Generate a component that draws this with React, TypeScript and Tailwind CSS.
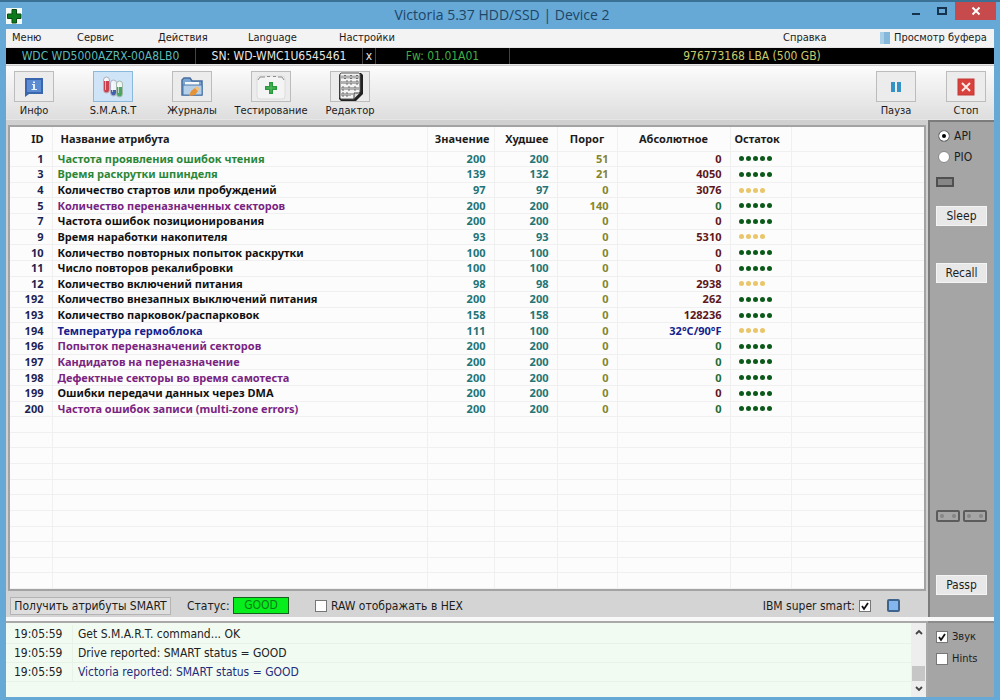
import * as React from 'react';

type Tone = 'green' | 'black' | 'purple' | 'blue';

interface Attribute {
  id: number;
  name: string;
  value: number;
  worst: number;
  threshold: number;
  raw: string;
  health: number;
  tone: Tone;
}

const toneClasses: Record<Tone, string> = {
  green: 'text-[#2b8738]',
  black: 'text-[#111111]',
  purple: 'text-[#7a2482]',
  blue: 'text-[#14228c]',
};

const rawClasses: Record<Tone, string> = {
  green: 'text-[#5e1620]',
  black: 'text-[#5e1620]',
  purple: 'text-[#1c6b35]',
  blue: 'text-[#14228c]',
};

const attributes: Attribute[] = [
  { id: 1, name: 'Частота проявления ошибок чтения', value: 200, worst: 200, threshold: 51, raw: '0', health: 5, tone: 'green' },
  { id: 3, name: 'Время раскрутки шпинделя', value: 139, worst: 132, threshold: 21, raw: '4050', health: 5, tone: 'green' },
  { id: 4, name: 'Количество стартов или пробуждений', value: 97, worst: 97, threshold: 0, raw: '3076', health: 4, tone: 'black' },
  { id: 5, name: 'Количество переназначенных секторов', value: 200, worst: 200, threshold: 140, raw: '0', health: 5, tone: 'purple' },
  { id: 7, name: 'Частота ошибок позиционирования', value: 200, worst: 200, threshold: 0, raw: '0', health: 5, tone: 'black' },
  { id: 9, name: 'Время наработки накопителя', value: 93, worst: 93, threshold: 0, raw: '5310', health: 4, tone: 'black' },
  { id: 10, name: 'Количество повторных попыток раскрутки', value: 100, worst: 100, threshold: 0, raw: '0', health: 5, tone: 'black' },
  { id: 11, name: 'Число повторов рекалибровки', value: 100, worst: 100, threshold: 0, raw: '0', health: 5, tone: 'black' },
  { id: 12, name: 'Количество включений питания', value: 98, worst: 98, threshold: 0, raw: '2938', health: 4, tone: 'black' },
  { id: 192, name: 'Количество внезапных выключений питания', value: 200, worst: 200, threshold: 0, raw: '262', health: 5, tone: 'black' },
  { id: 193, name: 'Количество парковок/распарковок', value: 158, worst: 158, threshold: 0, raw: '128236', health: 5, tone: 'black' },
  { id: 194, name: 'Температура гермоблока', value: 111, worst: 100, threshold: 0, raw: '32°C/90°F', health: 4, tone: 'blue' },
  { id: 196, name: 'Попыток переназначений секторов', value: 200, worst: 200, threshold: 0, raw: '0', health: 5, tone: 'purple' },
  { id: 197, name: 'Кандидатов на переназначение', value: 200, worst: 200, threshold: 0, raw: '0', health: 5, tone: 'purple' },
  { id: 198, name: 'Дефектные секторы во время самотеста', value: 200, worst: 200, threshold: 0, raw: '0', health: 5, tone: 'purple' },
  { id: 199, name: 'Ошибки передачи данных через DMA', value: 200, worst: 200, threshold: 0, raw: '0', health: 5, tone: 'black' },
  { id: 200, name: 'Частота ошибок записи (multi-zone errors)', value: 200, worst: 200, threshold: 0, raw: '0', health: 5, tone: 'purple' },
];

const EMPTY_ROWS = 11;

const logLines = [
  { time: '19:05:59', text: 'Get S.M.A.R.T. command... OK', className: 'text-[#222222]' },
  { time: '19:05:59', text: 'Drive reported: SMART status = GOOD', className: 'text-[#222222]' },
  { time: '19:05:59', text: 'Victoria reported: SMART status = GOOD', className: 'text-[#252c7a]' },
];

const InfoIcon = () => (
  <svg viewBox="0 0 22 22" className="h-[22px] w-[22px]">
    <path d="M2 2h18v16H6l-4 3z" fill="#3a66ae" />
    <rect x="4" y="4" width="14" height="12" fill="#5b8cd2" />
    <path d="M9 8h3v5h2v1H8.500v-1h1.500V9H9zM10 5.500h2v1.500h-2z" fill="#e4efff" />
  </svg>
);

const TubesIcon = () => (
  <svg viewBox="0 0 22 24" className="h-[24px] w-[22px]">
    <rect x="1.500" y="2" width="6" height="16" rx="3" fill="#f4f4f8" stroke="#b0aebc" />
    <path d="M2 6h5v9a2.500 2.500 0 0 1-5 0z" fill="#c9424e" />
    <rect x="8.500" y="5" width="6" height="16" rx="3" fill="#f0f3fa" stroke="#a9afc4" />
    <path d="M9 15h5v3a2.500 2.500 0 0 1-5 0z" fill="#3f63ab" />
    <rect x="14.500" y="6" width="6" height="16" rx="3" fill="#eef6f0" stroke="#a4b8ac" />
    <path d="M15 12h5v7a2.500 2.500 0 0 1-5 0z" fill="#4aa565" />
    <path d="M3.500 4v11M10.500 8v9M16.500 9v9" stroke="#ffffff" strokeOpacity=".6" />
  </svg>
);

const FolderIcon = () => (
  <svg viewBox="0 0 24 22" className="h-[22px] w-[24px]">
    <path d="M2 19V4l2-2h6l2 3h10v14z" fill="#7ea6d2" stroke="#456d9f" strokeWidth="1.500" />
    <path d="M5 6h14v3H5z" fill="#f5f8fb" />
    <path d="M3 19V9h19v10z" fill="#b7d0ea" stroke="#4f79aa" />
    <path d="M9 20l2-5 4-3 3 3-3 4z" fill="#e69236" />
    <path d="M15 12l2-2 3 3-2 2z" fill="#f3c079" />
  </svg>
);

const TestIcon = () => (
  <svg viewBox="0 0 30 26" className="h-[26px] w-[30px]">
    <rect x="1" y="2" width="28" height="23" rx="3" fill="#f4f4f4" stroke="#dcdcdc" />
    <path d="M2 6l2-3h5M11 2.500h3M17 2.500h3M22 3h4l2 3" fill="none" stroke="#8b8b8b" />
    <path d="M13 8h4v4h4v4h-4v4h-4v-4H9v-4h4z" fill="#289a3d" />
    <path d="M14.500 9.500h1v9h-1zM10.500 13.500h9v1h-9z" fill="#5cbd68" />
  </svg>
);

const HexIcon = () => (
  <svg viewBox="0 0 30 30" className="h-[30px] w-[30px]">
    <path d="M6 1h20l2 2v19l-7 7H6l-2-2V3z" fill="#222222" />
    <path d="M6 1h18l1 1v18l-6 7H6l-1-1V2z" fill="#f4f4f4" stroke="#555555" />
    <path
      d="M7 3.500v3M9 3.500h2v3H9zM13 3.500v3M15 3.500h2v3h-2zM19 3.500v3M21 3.500h2v3h-2zM7 9v3M9 9v3M11 9h2v3h-2zM15 9h2v3h-2zM19 9v3M21 9h2v3h-2zM7 15h2v3H7zM11 15v3M13 15h2v3h-2zM17 15v3M19 15h2v3h-2zM23 15v3M7 21h2v3H7zM11 21h2v3h-2zM15 21v3M17 21v2"
      fill="none"
      stroke="#6d6d6d"
    />
    <path d="M19 27v-6h6z" fill="#d8d8d8" stroke="#444444" />
  </svg>
);

const PauseIcon = () => (
  <svg viewBox="0 0 12 12" className="h-3 w-3">
    <path d="M1 1h4v10H1zM7 1h4v10H7z" fill="#3493c4" />
  </svg>
);

const StopIcon = () => (
  <svg viewBox="0 0 18 18" className="h-[18px] w-[18px]">
    <rect x="1" y="1" width="16" height="16" fill="#d9413d" stroke="#c23936" />
    <path d="M5 5l8 8M13 5l-8 8" stroke="#ffe9e4" strokeWidth="2" />
  </svg>
);

interface ToolButtonProps {
  label: string;
  active?: boolean;
  children: React.ReactNode;
}

const ToolButton: React.FC<ToolButtonProps> = ({ label, active, children }) => (
  <button type="button" className="flex w-10 flex-col items-center whitespace-nowrap">
    <span
      className={
        active
          ? 'flex h-[31px] w-10 items-center justify-center border border-[#8ab9dc] bg-[#cfe5f7]'
          : 'flex h-[31px] w-10 items-center justify-center border border-[#bcbcbc] bg-[#ececec]'
      }
    >
      {children}
    </span>
    <span className="mt-px leading-4">{label}</span>
  </button>
);

interface CheckProps {
  id: string;
  label: string;
  defaultChecked?: boolean;
  labelFirst?: boolean;
}

const Check: React.FC<CheckProps> = ({ id, label, defaultChecked, labelFirst }) => (
  <div className={labelFirst ? 'flex flex-row-reverse items-center gap-1' : 'flex items-center gap-1'}>
    <span className="grid h-3 w-3 place-items-center">
      <input
        id={id}
        type="checkbox"
        defaultChecked={defaultChecked}
        className="peer col-start-1 row-start-1 h-3 w-3 appearance-none border border-[#777777] bg-white"
      />
      <svg viewBox="0 0 12 12" className="pointer-events-none col-start-1 row-start-1 hidden h-3 w-3 peer-checked:block">
        <path d="M3 6l2 3 4-6" fill="none" stroke="#111111" strokeWidth="1.800" />
      </svg>
    </span>
    <label htmlFor={id}>{label}</label>
  </div>
);

const Radio: React.FC<CheckProps> = ({ id, label, defaultChecked }) => (
  <div className="flex items-center gap-1">
    <input
      id={id}
      type="radio"
      name="mode"
      defaultChecked={defaultChecked}
      className="h-3 w-3 appearance-none rounded-full border border-[#888888] bg-white checked:bg-black checked:shadow-[inset_0_0_0_3px_white]"
    />
    <label htmlFor={id}>{label}</label>
  </div>
);

const SideButton: React.FC<{ label: string }> = ({ label }) => (
  <button type="button" className="h-5 w-full border border-[#f4f4f4] bg-[#e8e8e8] text-center">
    {label}
  </button>
);

const TitleBar = () => (
  <header className="grid h-[29px] grid-cols-[1fr_auto_1fr] border-t-2 border-[#3c7196]">
    <div className="flex items-center pl-[6px]">
      <svg viewBox="0 0 16 16" className="h-4 w-4">
        <rect width="16" height="16" fill="#f4faf4" />
        <path d="M6 1.500h4.500V6H15v4.500h-4.500V15H6v-4.500H1.500V6H6z" fill="#0d7a1c" stroke="#0a4a12" />
      </svg>
    </div>
    <h1 className="pt-[3px] pl-1 font-['Open_Sans',sans-serif] text-[14px] leading-5 text-[#1d4668]">
      Victoria 5.37 HDD/SSD | Device 2
    </h1>
    <div className="flex items-start justify-end pr-1">
      <button type="button" aria-label="Minimize" className="flex h-[18px] w-[26px] items-center justify-center">
        <svg viewBox="0 0 10 10" className="h-[10px] w-[10px]">
          <path d="M1 7h8v2H1z" fill="#16324c" />
        </svg>
      </button>
      <button type="button" aria-label="Maximize" className="flex h-[18px] w-[26px] items-center justify-center">
        <svg viewBox="0 0 10 8" className="h-2 w-[10px]">
          <path d="M1 1h8v6H1z" fill="none" stroke="#16324c" strokeWidth="2" />
        </svg>
      </button>
      <button type="button" aria-label="Close" className="flex h-[18px] w-[41px] items-center justify-center bg-[#c74a4c]">
        <svg viewBox="0 0 10 10" className="h-[10px] w-[10px]">
          <path d="M1.500 1.500l7 7M8.500 1.500l-7 7" stroke="#ffffff" strokeWidth="2" />
        </svg>
      </button>
    </div>
  </header>
);

const MenuBar = () => (
  <nav className="grid h-[18px] grid-cols-[65px_81px_90px_91px_1fr_97px_114px] items-center bg-[#f3f3f3] pl-[6px] text-left text-[11px]">
    <button type="button" className="text-left">Меню</button>
    <button type="button" className="text-left">Сервис</button>
    <button type="button" className="text-left">Действия</button>
    <button type="button" className="text-left">Language</button>
    <button type="button" className="text-left">Настройки</button>
    <button type="button" className="text-left">Справка</button>
    <button type="button" className="flex items-center gap-1 whitespace-nowrap">
      <span className="h-3 w-[10px] border-l-4 border-[#a9cfe8] bg-[#84b7da]" />
      Просмотр буфера
    </button>
  </nav>
);

const DriveStrip = () => (
  <div className="mt-px grid h-4 grid-cols-[189px_167px_14px_134px_1fr] items-center bg-black text-center text-[12px] leading-4">
    <span className="text-[#5cb9b9]">WDC WD5000AZRX-00A8LB0</span>
    <span className="border-l border-[#444444] text-[#e6e6e6]">SN: WD-WMC1U6545461</span>
    <button type="button" className="border-x border-[#444444] text-[#e6e6e6]">x</button>
    <span className="border-r border-[#444444] text-[#3fae45]">Fw: 01.01A01</span>
    <span className="text-[#c9c96c]">976773168 LBA (500 GB)</span>
  </div>
);

const Toolbar = () => (
  <div className="flex h-[54px] items-start justify-between border-t border-[#cccccc] bg-linear-to-b from-[#fcfcfc] to-[#dedede] pt-[5px] pr-2 pl-2 text-[11px]">
    <div className="flex gap-[39px]">
      <ToolButton label="Инфо"><InfoIcon /></ToolButton>
      <ToolButton label="S.M.A.R.T" active><TubesIcon /></ToolButton>
      <ToolButton label="Журналы"><FolderIcon /></ToolButton>
      <ToolButton label="Тестирование"><TestIcon /></ToolButton>
      <ToolButton label="Редактор"><HexIcon /></ToolButton>
    </div>
    <div className="flex gap-[30px]">
      <ToolButton label="Пауза"><PauseIcon /></ToolButton>
      <ToolButton label="Стоп"><StopIcon /></ToolButton>
    </div>
  </div>
);

const cell = 'border-r border-b border-[#f0f0f0] p-0';

const AttributeTable = () => (
  <table className="h-full w-full table-fixed border-collapse font-['Noto_Sans',sans-serif] text-[11px] leading-3 font-bold">
    <colgroup>
      <col className="w-[42px]" />
      <col />
      <col className="w-[67px]" />
      <col className="w-[63px]" />
      <col className="w-[60px]" />
      <col className="w-[113px]" />
      <col className="w-[61px]" />
      <col className="w-[133px]" />
    </colgroup>
    <thead>
      <tr className="h-[24px] text-[#1c1c1c]">
        <th className={`${cell} pr-2 text-right`}>ID</th>
        <th className={`${cell} pl-2 text-left`}>Название атрибута</th>
        <th className={`${cell} pr-1 text-right`}>Значение</th>
        <th className={`${cell} pr-2 text-right`}>Худшее</th>
        <th className={`${cell} text-center`}>Порог</th>
        <th className={`${cell} text-center`}>Абсолютное</th>
        <th className={`${cell} pl-1 text-left`}>Остаток</th>
        <th className="border-b border-[#f0f0f0] p-0" />
      </tr>
    </thead>
    <tbody>
      {attributes.map((a) => (
        <tr key={a.id}>
          <td className={`${cell} pr-2 text-right text-[#201f52]`}>{a.id}</td>
          <td className={`${cell} whitespace-nowrap pl-[5px] ${toneClasses[a.tone]}`}>{a.name}</td>
          <td className={`${cell} pr-2 text-right text-[#227476]`}>{a.value}</td>
          <td className={`${cell} pr-2 text-right text-[#227476]`}>{a.worst}</td>
          <td className={`${cell} pr-2 text-right text-[#85852c]`}>{a.threshold}</td>
          <td className={`${cell} pr-2 text-right ${rawClasses[a.tone]}`}>{a.raw}</td>
          <td className={`${cell} pl-2`}>
            <span role="img" aria-label={`${a.health} / 5`} className="flex gap-[2px]">
              {Array.from({ length: a.health }, (_, i) => (
                <i
                  key={i}
                  className={a.health === 5 ? 'h-[5px] w-[5px] rounded-full bg-[#0c5a1a]' : 'h-[5px] w-[5px] rounded-full bg-[#eac66a]'}
                />
              ))}
            </span>
          </td>
          <td className="border-b border-[#f0f0f0] p-0" />
        </tr>
      ))}
      {Array.from({ length: EMPTY_ROWS }, (_, i) => (
        <tr key={`empty-${i}`} aria-hidden="true">
          {Array.from({ length: 8 }, (_, c) => (
            <td key={c} className={c < 7 ? cell : 'border-b border-[#f0f0f0] p-0'}>&nbsp;</td>
          ))}
        </tr>
      ))}
    </tbody>
  </table>
);

const StatusBar = () => (
  <div className="flex h-[26px] items-center bg-[#d4d4d4] pt-[3px] pr-7 pl-1 text-[12px] leading-4">
    <button type="button" className="h-[18px] w-[161px] border border-[#b4b4b4] bg-[#dedede] whitespace-nowrap">
      Получить атрибуты SMART
    </button>
    <span className="ml-4 w-[42px] whitespace-nowrap">Статус:</span>
    <output className="ml-1 h-[17px] w-[56px] border border-[#14601c] bg-[#06ee1b] text-center leading-[15px] text-[#0c7c1a]">
      GOOD
    </output>
    <div className="ml-[26px]">
      <Check id="raw-hex" label="RAW отображать в HEX" />
    </div>
    <div className="ml-auto flex items-center gap-4">
      <Check id="ibm-smart" label="IBM super smart:" defaultChecked labelFirst />
      <span className="h-[13px] w-[13px] rounded-[2px] border-2 border-[#3e648e] bg-[#83b6ee]" />
    </div>
  </div>
);

const Sidebar = () => (
  <aside className="flex w-[66px] flex-col border-t-2 border-l-2 border-[#7c7c7c] bg-[#a5a5a5] pt-[6px] pr-[7px] pb-[22px] pl-[6px] text-[12px] leading-4">
    <div className="flex flex-col gap-[5px] pl-[2px]">
      <Radio id="mode-api" label="API" defaultChecked />
      <Radio id="mode-pio" label="PIO" />
    </div>
    <span className="mt-3 h-[10px] w-[18px] border-2 border-[#505050] bg-[#868686]" />
    <div className="mt-[19px] flex flex-col gap-[37px]">
      <SideButton label="Sleep" />
      <SideButton label="Recall" />
    </div>
    <div className="mt-auto flex justify-between">
      <span className="flex h-3 w-6 items-center justify-center rounded-[2px] border-2 border-[#5c5c5c]">
        <span className="h-1 w-4 border-x-4 border-dotted border-[#868686]" />
      </span>
      <span className="flex h-3 w-6 items-center justify-center rounded-[2px] border-2 border-[#5c5c5c]">
        <span className="h-1 w-4 border-x-4 border-dotted border-[#868686]" />
      </span>
    </div>
    <div className="mt-[53px]">
      <SideButton label="Passp" />
    </div>
  </aside>
);

const Log = () => (
  <div className="flex min-w-0 flex-1 border-t-2 border-r-2 border-[#a9a9a9] bg-[#f1fbf1]">
    <ol className="min-w-0 flex-1 pt-[2px] text-[12px] leading-[18px]">
      {logLines.map((line) => (
        <li key={line.text} className="flex border-b border-[#e8f3e8]">
          <time className="w-[67px] border-r border-[#e8f3e8] pl-2 text-[#222222]">{line.time}</time>
          <span className={`pl-[5px] ${line.className}`}>{line.text}</span>
        </li>
      ))}
    </ol>
    <div className="flex w-[15px] flex-col items-center bg-[#eeeeee]">
      <button type="button" aria-label="Scroll up" className="flex h-[18px] items-center">
        <svg viewBox="0 0 8 6" className="h-[6px] w-2">
          <path d="M1 5l3-3 3 3" fill="none" stroke="#444444" strokeWidth="1.800" />
        </svg>
      </button>
      <span className="mt-auto h-[15px] w-[13px] bg-[#c6c6c6]" />
      <button type="button" aria-label="Scroll down" className="flex h-[16px] items-center">
        <svg viewBox="0 0 8 6" className="h-[6px] w-2">
          <path d="M1 1l3 3 3-3" fill="none" stroke="#444444" strokeWidth="1.800" />
        </svg>
      </button>
    </div>
  </div>
);

export default function App() {
  return (
    <div className="flex h-screen flex-col bg-[#66a8d6] font-['DejaVu_Sans_Condensed','DejaVu_Sans',sans-serif] text-[#1c1c1c]">
      <TitleBar />
      <div className="mx-[6px] mb-[3px] flex min-h-0 flex-1 flex-col bg-[#e6e6e6]">
        <MenuBar />
        <DriveStrip />
        <div className="mt-px">
          <Toolbar />
        </div>
        <div className="mt-px flex min-h-0 flex-1">
          <main className="flex min-w-0 flex-1 flex-col bg-[#d0d0d0] pt-[5px]">
            <div className="mx-[2px] min-h-0 flex-1 border-2 border-[#a3a3a3] bg-[#fcfcfc]">
              <AttributeTable />
            </div>
            <StatusBar />
          </main>
          <Sidebar />
        </div>
        <div className="h-[4px] bg-[#f8f8f8]" />
        <footer className="flex h-[76px]">
          <Log />
          <div className="flex w-[66px] flex-col gap-[6px] border-t-2 border-[#8c8c8c] bg-[#a5a5a5] pt-[6px] pl-2 text-[11px] leading-4">
            <Check id="sound" label="Звук" defaultChecked />
            <Check id="hints" label="Hints" />
          </div>
        </footer>
      </div>
    </div>
  );
}
